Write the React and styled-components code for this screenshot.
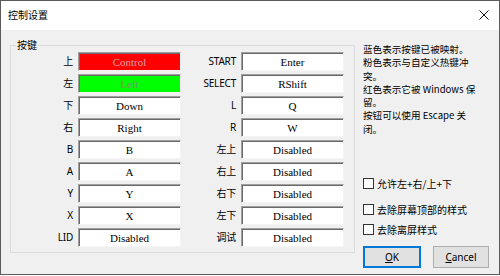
import React from "react";
import styled, { createGlobalStyle } from "styled-components";

const Global = createGlobalStyle`
  html, body { margin: 0; padding: 0; background: #ffffff; }
  * { box-sizing: border-box; }
`;

const UI_FONT = `"Noto Sans", "Noto Sans CJK SC", sans-serif`;
const CJK_FONT = `"Noto Sans CJK SC", "Noto Sans", sans-serif`;

const Window = styled.div`
  width: 500px;
  height: 275px;
  border: 1px solid #5b5b5b;
  background: #f0f0f0;
  display: flex;
  flex-direction: column;
  font-family: ${UI_FONT};
  color: #000;
`;

const TitleBar = styled.div`
  height: 29px;
  flex: none;
  background: #ffffff;
  display: flex;
  align-items: center;
  justify-content: space-between;
  padding: 0 10px 0 7px;
`;

const Title = styled.span`
  font-family: ${CJK_FONT};
  font-size: 10px;
  line-height: 12px;
  margin-top: -1px;
`;

const Close = styled.span`
  width: 10px;
  height: 10px;
  display: flex;
  margin-top: -2px;
`;

const Body = styled.div`
  flex: 1;
  display: flex;
  align-items: flex-start;
  padding: 15px 0 0 9px;
`;

const Group = styled.div`
  position: relative;
  width: 345px;
  height: 208px;
  border: 1px solid #dcdcdc;
  padding: 6px 0 0 0;
`;

const Legend = styled.span`
  position: absolute;
  top: -7px;
  left: 5px;
  padding: 0 1px;
  background: #f0f0f0;
  font-family: ${CJK_FONT};
  font-size: 10px;
  line-height: 12px;
`;

const Grid = styled.div`
  display: grid;
  grid-template-columns: 62px 103px 50px 103px;
  grid-auto-rows: 19px;
  column-gap: 5px;
  row-gap: 3px;
`;

const KeyLabel = styled.span`
  text-align: right;
  font-size: 10px;
  line-height: 19px;
  font-family: ${UI_FONT};
  letter-spacing: -0.2px;
  white-space: nowrap;
`;

const KeyBox = styled.div`
  background: ${(p) => p.$fill || "#ffffff"};
  border-style: solid;
  border-width: 1px;
  border-color: #a0a0a0 #f4f4f4 #f4f4f4 #a0a0a0;
  box-shadow: inset 1px 1px 0 #6a6a6a;
  display: flex;
  align-items: center;
  justify-content: center;
  font-family: "Liberation Serif", "DejaVu Serif", serif;
  font-size: 11px;
  color: ${(p) => p.$ink || "#000"};
  padding-top: 1px;
  white-space: nowrap;
`;

const Side = styled.div`
  display: flex;
  flex-direction: column;
  margin-left: 8px;
  width: 128px;
`;

const Help = styled.div`
  margin-top: -2px;
  font-family: ${CJK_FONT};
  font-size: 9.6px;
  line-height: 13.3px;
`;

const HelpLine = styled.div`
  white-space: nowrap;
  height: 13.3px;
`;

const Check = styled.label`
  display: flex;
  align-items: center;
  gap: 3px;
  height: 14px;
  margin-top: ${(p) => p.$top}px;
  font-family: ${CJK_FONT};
  font-size: 10px;
  white-space: nowrap;
`;

const Box = styled.span`
  width: 11px;
  height: 11px;
  border: 1px solid #333333;
  background: #ffffff;
  flex: none;
`;

const Buttons = styled.div`
  display: flex;
  gap: 12px;
  margin-top: 10px;
`;

const Button = styled.div`
  width: ${(p) => p.$w}px;
  height: 22px;
  background: #e1e1e1;
  border: 1px solid ${(p) => (p.$primary ? "#0078d7" : "#adadad")};
  box-shadow: ${(p) => (p.$primary ? "inset 0 0 0 1px #0078d7" : "none")};
  display: flex;
  align-items: center;
  justify-content: center;
  font-size: 10px;
  font-family: ${UI_FONT};
  & u { text-decoration: underline; text-underline-offset: 1px; }
`;

const left = [
  ["上", "Control", "#ff0000", "#d8a0a0"],
  ["左", "Left", "#00ff00", "#6f9a6f"],
  ["下", "Down"],
  ["右", "Right"],
  ["B", "B"],
  ["A", "A"],
  ["Y", "Y"],
  ["X", "X"],
  ["LID", "Disabled"],
];
const right = [
  ["START", "Enter"],
  ["SELECT", "RShift"],
  ["L", "Q"],
  ["R", "W"],
  ["左上", "Disabled"],
  ["右上", "Disabled"],
  ["右下", "Disabled"],
  ["左下", "Disabled"],
  ["调试", "Disabled"],
];

const help = [
  "蓝色表示按键已被映射。",
  "粉色表示与自定义热键冲",
  "突。",
  "红色表示它被 Windows 保",
  "留。",
  "按钮可以使用 Escape 关",
  "闭。",
];

export default function App() {
  return (
    <>
      <Global />
      <Window>
        <TitleBar>
          <Title>控制设置</Title>
          <Close>
            <svg width="10" height="10" viewBox="0 0 10 10">
              <path d="M0.5 0.5 L9.5 9.5 M9.5 0.5 L0.5 9.5" stroke="#111" strokeWidth="1" fill="none" />
            </svg>
          </Close>
        </TitleBar>
        <Body>
          <Group>
            <Legend>按键</Legend>
            <Grid>
              {left.map((l, i) => (
                <React.Fragment key={i}>
                  <KeyLabel>{l[0]}</KeyLabel>
                  <KeyBox $fill={l[2]} $ink={l[3]}>{l[1]}</KeyBox>
                  <KeyLabel>{right[i][0]}</KeyLabel>
                  <KeyBox>{right[i][1]}</KeyBox>
                </React.Fragment>
              ))}
            </Grid>
          </Group>
          <Side>
            <Help>
              {help.map((h, i) => (
                <HelpLine key={i}>{h}</HelpLine>
              ))}
            </Help>
            <Check $top={40}>
              <Box />
              允许左+右/上+下
            </Check>
            <Check $top={12}>
              <Box />
              去除屏幕顶部的样式
            </Check>
            <Check $top={6}>
              <Box />
              去除离屏样式
            </Check>
            <Buttons>
              <Button $primary $w={58}>
                <span><u>O</u>K</span>
              </Button>
              <Button $w={56}>
                <span><u>C</u>ancel</span>
              </Button>
            </Buttons>
          </Side>
        </Body>
      </Window>
    </>
  );
}
